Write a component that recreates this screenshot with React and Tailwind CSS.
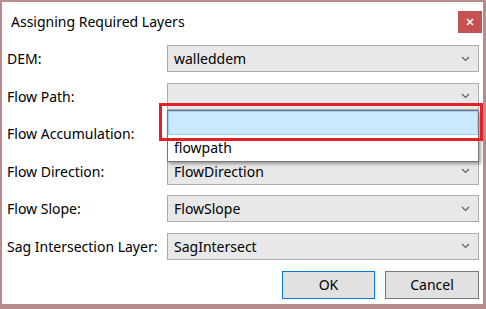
import React from 'react';

const rows = [
  { label: 'DEM:', value: 'walleddem' },
  { label: 'Flow Path:', value: '' },
  { label: 'Flow Accumulation:', value: '' },
  { label: 'Flow Direction:', value: 'FlowDirection' },
  { label: 'Flow Slope:', value: 'FlowSlope' },
  { label: 'Sag Intersection Layer:', value: 'SagIntersect' },
];

const Chevron = () => (
  <svg width="9" height="6" viewBox="0 0 9 6" className="shrink-0">
    <polyline points="1,1 4.5,4.5 8,1" fill="none" stroke="#606060" strokeWidth="1.2" />
  </svg>
);

const Combo = ({ value }) => (
  <div className="flex-1 h-[27px] flex items-center justify-between border border-[#acacac] bg-[#e8e8e8] pl-[6px] pr-[8px] text-[14px] text-black">
    <span>{value}</span>
    <Chevron />
  </div>
);

export default function App() {
  return (
    <div
      className="w-[486px] h-[309px] bg-[#b88c8c] pt-[2px] pl-[2px] pr-[3px] pb-[5px]"
      style={{ fontFamily: '"Noto Sans", "Open Sans", sans-serif' }}
    >
      <div className="relative h-full bg-white flex flex-col">
        <div className="h-[43px] flex items-start justify-between">
          <div className="pl-[9px] pt-[10px] text-[14px] text-black leading-[20px]">Assigning Required Layers</div>
          <div className="mt-[9px] mr-[1px] w-[24px] h-[22px] bg-[#c75050] flex items-center justify-center">
            <svg width="8" height="8" viewBox="0 0 8 8">
              <path d="M1 1L7 7M7 1L1 7" stroke="white" strokeWidth="1.6" />
            </svg>
          </div>
        </div>

        <div className="flex flex-col gap-[10.6px]">
          {rows.map((r) => (
            <div key={r.label} className="flex items-center h-[27px] pr-[4px]">
              <div className="w-[165px] pl-[5px] text-[14px] text-black whitespace-nowrap">{r.label}</div>
              <Combo value={r.value} />
            </div>
          ))}
        </div>

        <div className="flex justify-end gap-[10px] pr-[4px] mt-[11px]">
          <button className="w-[93px] h-[28px] border border-[#0078d7] bg-[#e1e1e1] text-[14px] text-black">OK</button>
          <button className="w-[94px] h-[28px] border border-[#7a7a7a] bg-[#e1e1e1] text-[14px] text-black">Cancel</button>
        </div>

        {/* open dropdown list */}
        <div className="absolute left-[165px] top-[108px] w-[312px] h-[52px] bg-white border border-[#767676] shadow-[2px_2px_3px_rgba(0,0,0,0.35)] flex flex-col">
          <div className="h-[24px] bg-[#cce8ff] border border-[#99d1ff]" />
          <div className="pl-[6px] text-[14px] text-black leading-[26px]">flowpath</div>
        </div>

        {/* red annotation box */}
        <div className="absolute left-[157px] top-[101px] w-[324px] h-[38px] border-[3px] border-[#e3202a]" />
      </div>
    </div>
  );
}
